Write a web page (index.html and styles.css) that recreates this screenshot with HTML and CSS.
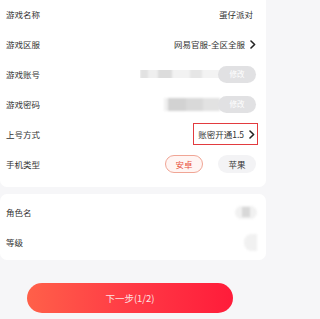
FILE: index.html
```html
<!DOCTYPE html>
<html lang="zh-CN">
<head>
<meta charset="utf-8">
<link rel="stylesheet" href="styles.css">
</head>
<body>
<div class="page">
  <div class="card card-main">
    <div class="row row-first">
      <span class="label">游戏名称</span>
      <span class="value">蛋仔派对</span>
    </div>
    <div class="row">
      <span class="label">游戏区服</span>
      <span class="value">网易官服-全区全服<svg class="chev" viewBox="0 0 6 9"><polyline points="1,1 4.6,4.5 1,8" /></svg></span>
    </div>
    <div class="row">
      <span class="label">游戏账号</span>
      <span class="value">
        <span class="masked masked-a"></span>
        <span class="pill-gray">修改</span>
      </span>
    </div>
    <div class="row">
      <span class="label">游戏密码</span>
      <span class="value">
        <span class="masked masked-b"></span>
        <span class="pill-gray">修改</span>
      </span>
    </div>
    <div class="row">
      <span class="label">上号方式</span>
      <span class="value boxed">账密开通1.5<svg class="chev" viewBox="0 0 6 9"><polyline points="1,1 4.6,4.5 1,8" /></svg></span>
    </div>
    <div class="row">
      <span class="label">手机类型</span>
      <span class="value opts">
        <span class="opt opt-on">安卓</span>
        <span class="opt opt-off">苹果</span>
      </span>
    </div>
  </div>

  <div class="card card-role">
    <div class="row">
      <span class="label">角色名</span>
      <span class="value"><span class="masked-c"><span class="masked-c-core"></span></span></span>
    </div>
    <div class="row">
      <span class="label">等级</span>
      <span class="value"><span class="masked-d"></span></span>
    </div>
  </div>

  <div class="footer">
    <button class="next">下一步(1/2)</button>
  </div>
</div>
</body>
</html>
```

FILE: styles.css
```css
* { box-sizing: border-box; }
html, body {
  margin: 0;
  padding: 0;
  background: #f6f6f8;
  font-family: "Noto Sans CJK SC", "Noto Sans", sans-serif;
  color: #333;
}
.page {
  width: 270px;
  height: 319px;
  overflow: hidden;
}
.card {
  width: 266px;
  background: #fff;
  border-radius: 0 0 7px 7px;
}
.card-main {
  padding: 0 0 8px 0;
}
.card-role {
  margin-top: 7px;
  padding: 3px 0 3px 0;
  border-radius: 7px;
}
.row {
  height: 30px;
  display: flex;
  align-items: center;
  justify-content: space-between;
  padding: 0 10px 0 6px;
  font-size: 8.5px;
  line-height: 1;
}
.row-first { height: 29px; }
.label { color: #333; }
.value {
  display: flex;
  align-items: center;
  color: #333;
}
.row-first .value { margin-right: 3px; }
.chev {
  width: 6px;
  height: 9px;
  margin-left: 5px;
  fill: none;
  stroke: #222;
  stroke-width: 1.6;
  stroke-linecap: round;
  stroke-linejoin: round;
}
.boxed {
  border: 1.5px solid #e23b3f;
  height: 22px;
  padding: 0 2px 0 4px;
  margin-right: -2px;
}
.masked {
  display: block;
  filter: blur(1.2px);
}
.masked-a {
  width: 80px;
  height: 12px;
  margin-right: -2px;
  background:
    linear-gradient(90deg, #e2e2e2 0 10%, #efefef 10% 22%, #dcdcdc 22% 40%, #f2f2f2 40% 62%, #e6e6e6 62% 78%, #f3f3f3 78%);
  -webkit-mask: linear-gradient(180deg, transparent 0 20%, #000 20% 85%, transparent 85%);
  mask: linear-gradient(180deg, transparent 0 20%, #000 20% 85%, transparent 85%);
}
.masked-b {
  width: 56px;
  height: 13px;
  margin-right: -2px;
  background: linear-gradient(90deg, #f0f0f0 0 8%, #d2d2d2 8% 40%, #d9d9d9 40% 70%, #e2e2e2 70%);
}
.pill-gray {
  display: flex;
  align-items: center;
  justify-content: center;
  width: 38px;
  height: 17px;
  border-radius: 9px;
  background: #e1e1e3;
  color: #fff;
  font-size: 7.5px;
  position: relative;
}
.opts { gap: 15px; }
.opt {
  display: flex;
  align-items: center;
  justify-content: center;
  width: 38px;
  height: 18px;
  border-radius: 9px;
  font-size: 8.5px;
}
.opt-on {
  background: #fff5f3;
  border: 1px solid #f0a595;
  color: #e8503c;
}
.opt-off {
  background: #f3f3f5;
  color: #333;
}
.masked-c {
  display: flex;
  align-items: center;
  justify-content: center;
  width: 22px;
  height: 13px;
  border-radius: 7px;
  background: #f1f1f1;
  filter: blur(1px);
  margin-right: -1px;
}
.masked-c-core {
  width: 8px;
  height: 10px;
  background: #d8d8d8;
}
.masked-d {
  display: block;
  width: 13px;
  height: 17px;
  border-radius: 8px 0 0 8px;
  background: #f1f1f1;
  filter: blur(1px);
  margin-right: -1px;
}
.footer {
  padding: 23px 0 0 27px;
}
.next {
  display: block;
  width: 206px;
  height: 30px;
  border: none;
  border-radius: 15px;
  background: linear-gradient(90deg, #ff6049 0%, #ff3a45 50%, #ff1c3a 100%);
  color: #fde3e3;
  font-family: "Noto Sans CJK SC", "Noto Sans", sans-serif;
  font-size: 9.5px;
  padding: 0;
}
```
